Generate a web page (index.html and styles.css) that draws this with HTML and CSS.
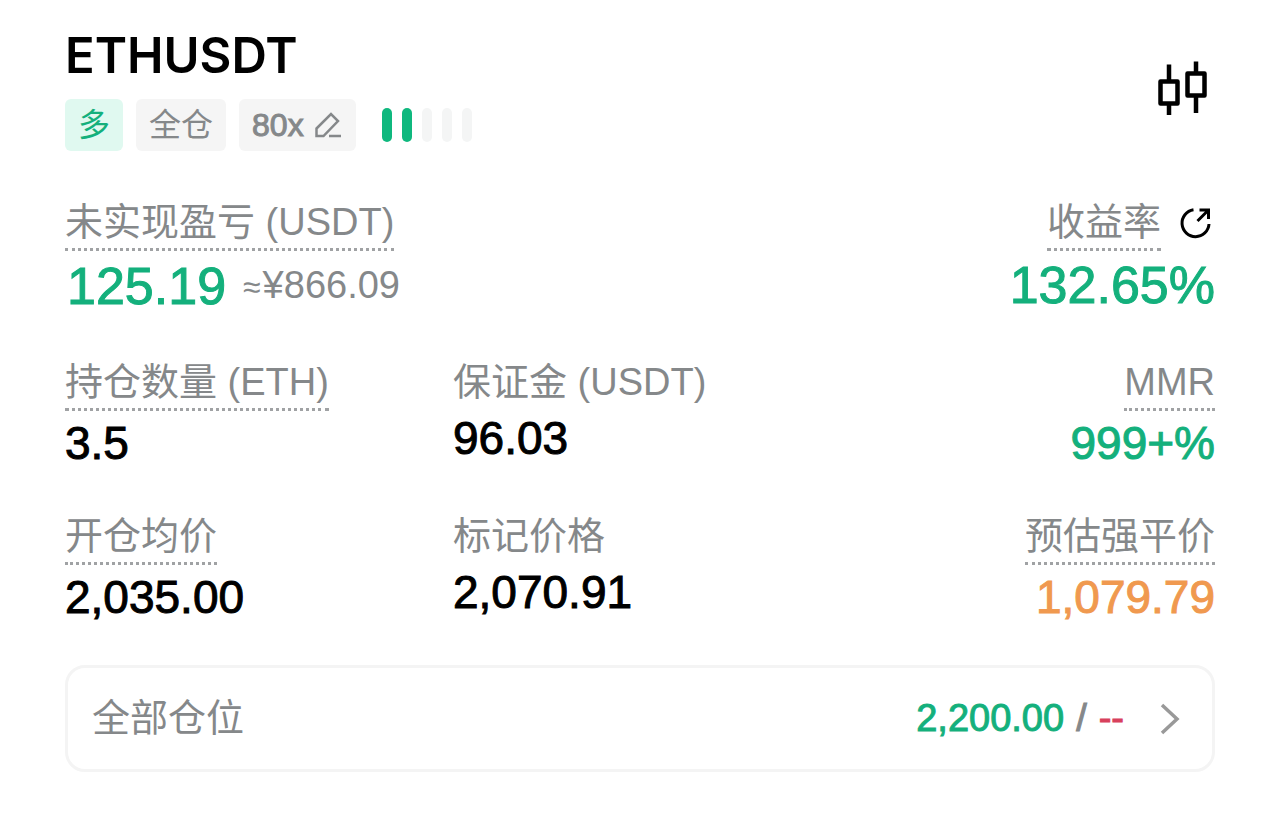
FILE: index.html
```html
<!DOCTYPE html>
<html lang="zh-CN">
<head>
<meta charset="utf-8">
<meta name="viewport" content="width=device-width, initial-scale=1">
<title>ETHUSDT</title>
<link rel="stylesheet" href="styles.css">
</head>
<body>
<main class="position">
  <header class="header">
    <div class="heading">
      <h1 class="symbol">ETHUSDT</h1>
      <div class="tags">
        <span class="tag tag-long">多</span>
        <span class="tag">全仓</span>
        <button class="tag tag-leverage" type="button">80x
          <svg width="26" height="26" viewBox="0 0 26 26" fill="none" stroke="currentColor" stroke-width="2.500"><path d="M1.500 16.500 16 2l7 7L8.500 24h-7zM14 24h12"/></svg>
        </button>
        <span class="risk"><i class="bar on"></i><i class="bar on"></i><i class="bar"></i><i class="bar"></i><i class="bar"></i></span>
      </div>
    </div>
    <button class="icon-button chart" type="button" aria-label="K线">
      <svg width="50" height="54" viewBox="0 0 50 54" fill="none" stroke="currentColor" stroke-width="4.500" stroke-linejoin="round"><path d="M2.500 20.500h17v22h-17zM11 3.500v17M11 42.500V54M29.500 12.500h17v22h-17zM38 .500v12M38 34.500V52"/></svg>
    </button>
  </header>

  <section class="row summary">
    <div class="cell">
      <span class="label dotted">未实现盈亏 (USDT)</span>
      <div class="pnl"><strong class="big green">125.19</strong><span class="approx"><small>≈</small>¥866.09</span></div>
    </div>
    <div class="cell end">
      <div class="label-line"><span class="label dotted">收益率</span>
        <button class="icon-button" type="button" aria-label="分享">
          <svg width="36" height="36" viewBox="0 0 36 36" fill="none" stroke="currentColor" stroke-width="3"><path d="M14.500 2.800A13.500 13.500 0 1 0 30 17M20.500 3h9v9M29.500 3l-11 11"/></svg>
        </button>
      </div>
      <strong class="big green">132.65%</strong>
    </div>
  </section>

  <section class="row">
    <div class="cell"><span class="label dotted">持仓数量 (ETH)</span><span class="value">3.5</span></div>
    <div class="cell"><span class="label">保证金 (USDT)</span><span class="value">96.03</span></div>
    <div class="cell end"><span class="label dotted">MMR</span><span class="value green">999+%</span></div>
  </section>

  <section class="row">
    <div class="cell"><span class="label dotted">开仓均价</span><span class="value">2,035.00</span></div>
    <div class="cell"><span class="label">标记价格</span><span class="value">2,070.91</span></div>
    <div class="cell end"><span class="label dotted">预估强平价</span><span class="value orange">1,079.79</span></div>
  </section>

  <button class="all" type="button">
    <span class="label">全部仓位</span>
    <span class="totals"><span class="green">2,200.00</span><span class="slash">/</span><span class="red">--</span></span>
    <svg class="chevron" width="20" height="32" viewBox="0 0 20 32" fill="none" stroke="currentColor" stroke-width="3.500"><path d="m2 2 15 14L2 30"/></svg>
  </button>
</main>
</body>
</html>
```
FILE: styles.css
```css
* { box-sizing: border-box; }
body {
  margin: 0;
  background: #fff;
  color: #000;
  font-family: "Liberation Sans", "Noto Sans CJK SC", sans-serif;
}
button { font: inherit; color: inherit; border: 0; background: none; padding: 0; cursor: pointer; }
.position { padding: 32px 65px 48px; }
.header { display: flex; justify-content: space-between; align-items: center; }
.symbol { margin: 0; font-family: Inter, sans-serif; font-size: 49px; line-height: 48px; font-weight: 600; }
.tags { display: flex; gap: 13px; margin-top: 19px; }
.tag {
  display: flex; align-items: center; gap: 11px;
  height: 52px; padding: 0 13px;
  border-radius: 6px; background: #f5f5f5; color: #85888a;
  font-size: 32px; line-height: 52px;
}
.tag-long { background: #e0f9f0; color: #14b07c; }
.tag-leverage { padding: 0 15px 0 13px; -webkit-text-stroke: 1px currentColor; }
.risk { display: flex; align-items: center; gap: 10px; margin-left: 13px; }
.bar { width: 10px; height: 34px; border-radius: 5px; background: #f4f5f5; }
.bar.on { background: #0fb87e; }
.icon-button { display: flex; color: #000; }
.chart { padding: 0 7px 8px 0; }
.row { display: grid; grid-template-columns: 388px 1fr auto; margin-top: 38px; }
.summary { grid-template-columns: 1fr auto; margin-top: 46px; }
.cell { display: flex; flex-direction: column; align-items: flex-start; }
.end { align-items: flex-end; }
.label { font-size: 38px; line-height: 51px; color: #85888a; }
.dotted { margin-bottom: 2px; border-bottom: 3px dotted #a0a2a4; }
.label-line { display: flex; align-items: center; gap: 18px; }
.big { font-size: 52px; line-height: 64px; font-weight: 400; -webkit-text-stroke: 1px currentColor; }
.pnl { display: flex; align-items: center; gap: 17px; padding-left: 2px; }
.approx { font-size: 38px; line-height: 64px; color: #85888a; }
.approx small { margin-right: 2px; font-size: 32px; }
.value { font-size: 46px; line-height: 60px; -webkit-text-stroke: 1px currentColor; }
.green { color: #14b07c; }
.orange { color: #f0994f; }
.red { color: #d8405c; }
.all {
  display: flex; align-items: center; width: 100%; height: 107px;
  margin-top: 38px; padding: 0 32px 0 24px;
  border: 3px solid #f4f4f4; border-radius: 20px;
}
.totals { display: flex; gap: 12px; margin-left: auto; font-size: 38px; -webkit-text-stroke: 1px currentColor; }
.slash { color: #85888a; }
.chevron { margin-left: 36px; color: #999; }
```
